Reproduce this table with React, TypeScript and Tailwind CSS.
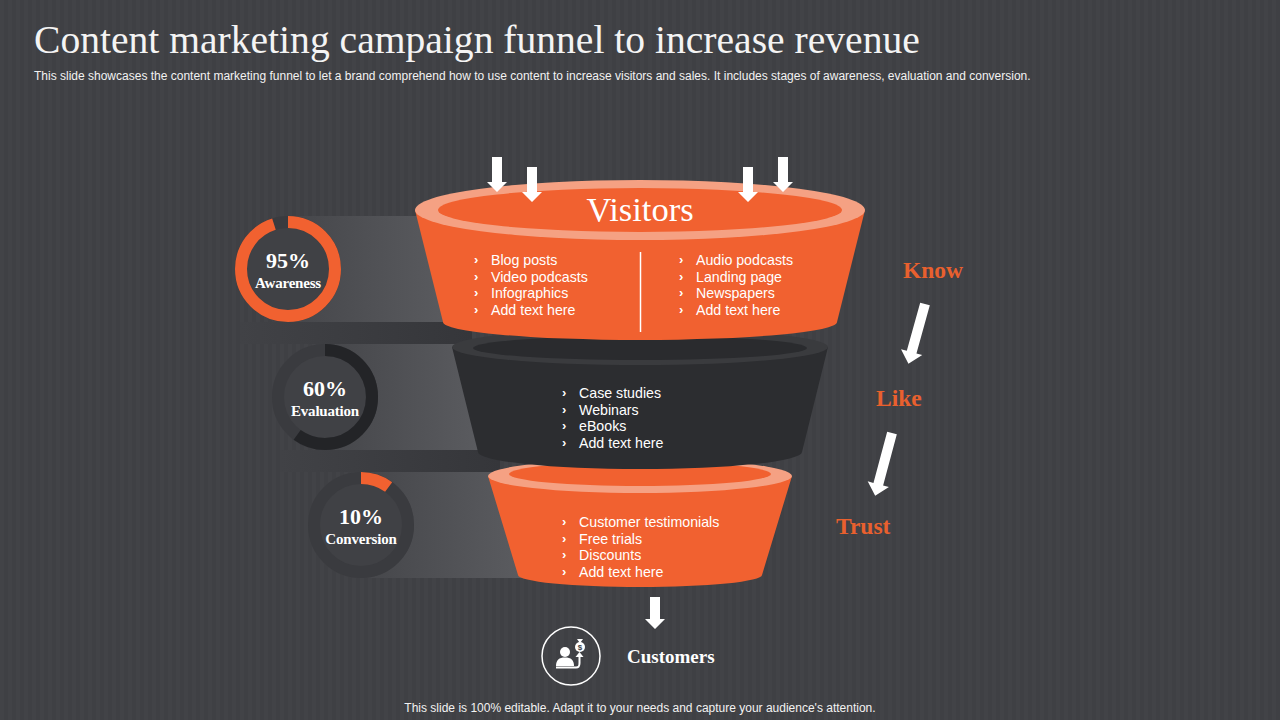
import React from "react";

const ORANGE = "#F16130";
const RIM = "#F5A183";
const C = 2 * Math.PI * 47;

const visitorsLeft = ["Blog posts", "Video podcasts", "Infographics", "Add text here"];
const visitorsRight = ["Audio podcasts", "Landing page", "Newspapers", "Add text here"];
const evaluation = ["Case studies", "Webinars", "eBooks", "Add text here"];
const conversion = ["Customer testimonials", "Free trials", "Discounts", "Add text here"];

const stages = [
  { cx: 288, cy: 269, pct: 0.95, label: "95%", name: "Awareness", color: ORANGE },
  { cx: 325, cy: 397, pct: 0.6, label: "60%", name: "Evaluation", color: "#232427" },
  { cx: 361, cy: 525, pct: 0.1, label: "10%", name: "Conversion", color: ORANGE },
];

function BulletList({ items }: { items: string[] }) {
  return (
    <div className="text-[14.2px] leading-[16.7px] text-white">
      {items.map((t, i) => (
        <div key={i} className="flex">
          <span className="w-[19px] pl-[2px] text-[13px] font-bold">›</span>
          <span>{t}</span>
        </div>
      ))}
    </div>
  );
}

function DownArrow({ x, top, tip }: { x: number; top: number; tip: number }) {
  const neck = tip - 10;
  return (
    <polygon
      points={`${x - 5},${top} ${x + 5},${top} ${x + 5},${neck} ${x + 10},${neck} ${x},${tip} ${x - 10},${neck} ${x - 5},${neck}`}
      fill="#ffffff"
    />
  );
}

function SlantArrow({ x, y, len, angle }: { x: number; y: number; len: number; angle: number }) {
  const neck = len - 12;
  return (
    <polygon
      transform={`rotate(${angle} ${x} ${y})`}
      points={`${x - 5},${y} ${x + 5},${y} ${x + 5},${y + neck} ${x + 11},${y + neck} ${x},${y + len} ${x - 11},${y + neck} ${x - 5},${y + neck}`}
      fill="#ffffff"
    />
  );
}

function Diagram() {
  return (
    <svg width="1280" height="720" viewBox="0 0 1280 720" className="absolute inset-0">
      <defs>
        <linearGradient id="band" x1="0" x2="1" y1="0" y2="0">
          <stop offset="0" stopColor="#45464a" />
          <stop offset="1" stopColor="#5b5c60" />
        </linearGradient>
        <linearGradient id="shade" x1="0" x2="1" y1="0" y2="0">
          <stop offset="0" stopColor="#414246" />
          <stop offset="1" stopColor="#35363a" />
        </linearGradient>
      </defs>

      {/* steps behind the rings */}
      <rect x="288" y="216" width="170" height="106" fill="url(#band)" />
      <rect x="240" y="322" width="232" height="22" fill="url(#shade)" />
      <rect x="325" y="344" width="160" height="106" fill="url(#band)" />
      <rect x="280" y="450" width="220" height="22" fill="url(#shade)" />
      <rect x="361" y="472" width="165" height="106" fill="url(#band)" />

      {/* rings */}
      {stages.map((s) => (
        <g key={s.name}>
          <circle cx={s.cx} cy={s.cy} r="53" fill="#404145" />
          <circle cx={s.cx} cy={s.cy} r="47" fill="none" stroke="#3a3b3f" strokeWidth="12" />
          <circle
            cx={s.cx}
            cy={s.cy}
            r="47"
            fill="none"
            stroke={s.color}
            strokeWidth="12"
            strokeDasharray={`${s.pct * C} ${C}`}
            transform={`rotate(-90 ${s.cx} ${s.cy})`}
          />
        </g>
      ))}

      {/* bottom funnel */}
      <path d="M488,476 L518,575 A122,12 0 0 0 762,575 L792,476 Z" fill={ORANGE} />
      <ellipse cx="640" cy="476" rx="152" ry="17" fill={RIM} />
      <ellipse cx="640" cy="474" rx="131" ry="12" fill={ORANGE} />

      {/* middle funnel */}
      <path d="M452,347 L478,452 A162,17 0 0 0 802,452 L828,347 Z" fill="#2c2d30" />
      <ellipse cx="640" cy="347" rx="188" ry="18" fill="#3a3b3e" />
      <ellipse cx="640" cy="348" rx="167" ry="12" fill="#2a2b2e" />

      {/* top funnel */}
      <path d="M415,210 L443,322 A197,18 0 0 0 837,322 L865,210 Z" fill={ORANGE} />
      <ellipse cx="640" cy="210" rx="225" ry="30" fill={RIM} />
      <ellipse cx="640" cy="210" rx="202" ry="22" fill={ORANGE} />
      <line x1="640.5" y1="252" x2="640.5" y2="332" stroke="#ffffff" strokeWidth="1.5" />

      <DownArrow x={497} top={157} tip={192} />
      <DownArrow x={532} top={167} tip={202} />
      <DownArrow x={748} top={167} tip={202} />
      <DownArrow x={783} top={157} tip={192} />
      <DownArrow x={655} top={597} tip={629} />

      <SlantArrow x={925} y={304} len={62} angle={15.5} />
      <SlantArrow x={892} y={433} len={65} angle={15} />

      {/* customers icon */}
      <circle cx="571" cy="656" r="29" fill="none" stroke="#ffffff" strokeWidth="1.5" />
      <circle cx="565" cy="652" r="5" fill="#ffffff" />
      <path d="M556,666 C556,660 559,657.5 565,657.5 C571,657.5 574,660 574,666 Z" fill="#ffffff" />
      <path d="M556,667.5 L576,667.5 C579,667.5 579.5,666 579.5,663 L579.5,656" fill="none" stroke="#ffffff" strokeWidth="2" />
      <polygon points="575.5,657 579.5,652 583.5,657" fill="#ffffff" />
      <circle cx="580" cy="647" r="5" fill="#ffffff" />
      <path d="M577,639 L583,639 L580.5,642.5 L579.5,642.5 Z" fill="#ffffff" />
      <text x="580" y="650" textAnchor="middle" fontSize="8" fontWeight="bold" fill="#404145" fontFamily="Liberation Sans, Arial, sans-serif">$</text>
    </svg>
  );
}

export default function App() {
  return (
    <div
      className="relative flex h-[720px] w-[1280px] flex-col overflow-hidden bg-[#414246] bg-[repeating-linear-gradient(90deg,#424347_0px,#424347_4px,#3f4044_4px,#3f4044_8px)] text-white"
      style={{ fontFamily: '"Liberation Sans", Arial, sans-serif' }}
    >
      <Diagram />

      <header className="relative z-10 px-[34px] pt-[21px]">
        <h1 className="font-['Liberation_Serif',serif] text-[39.6px] leading-[38px] text-[#f4f4f4]">
          Content marketing campaign funnel to increase revenue
        </h1>
        <p className="mt-[11px] text-[12px] leading-[13px] text-[#f2f2f2]">
          This slide showcases the content marketing funnel to let a brand comprehend how to use content to increase
          visitors and sales. It includes stages of awareness, evaluation and conversion.
        </p>
      </header>

      {/* funnel labels */}
      <div className="absolute left-[540px] top-[189px] w-[200px] text-center font-['Liberation_Serif',serif] text-[34.5px] leading-[40px]">
        Visitors
      </div>
      <div className="absolute left-[472px] top-[252px]">
        <BulletList items={visitorsLeft} />
      </div>
      <div className="absolute left-[677px] top-[252px]">
        <BulletList items={visitorsRight} />
      </div>
      <div className="absolute left-[560px] top-[385px]">
        <BulletList items={evaluation} />
      </div>
      <div className="absolute left-[560px] top-[514px]">
        <BulletList items={conversion} />
      </div>

      {/* ring labels */}
      {stages.map((s) => (
        <div
          key={s.name}
          className="absolute w-[110px] text-center font-['Liberation_Serif',serif] font-bold"
          style={{ left: s.cx - 55, top: s.cy - 19 }}
        >
          <div className="text-[22px] leading-[22px]">{s.label}</div>
          <div className="mt-[3px] text-[15px] leading-[16px] tracking-[-0.2px]">{s.name}</div>
        </div>
      ))}

      {/* know / like / trust */}
      <div className="absolute left-[903px] top-[257px] font-['Liberation_Serif',serif] text-[23.5px] font-bold leading-[26px] text-[#E9602E]">
        Know
      </div>
      <div className="absolute left-[876px] top-[385px] font-['Liberation_Serif',serif] text-[23.5px] font-bold leading-[26px] text-[#E9602E]">
        Like
      </div>
      <div className="absolute left-[836px] top-[513px] font-['Liberation_Serif',serif] text-[23.5px] font-bold leading-[26px] text-[#E9602E]">
        Trust
      </div>

      <div className="absolute left-[627px] top-[646px] font-['Liberation_Serif',serif] text-[19px] font-bold leading-[22px]">
        Customers
      </div>

      <div className="flex-1" />
      <footer className="relative z-10 pb-[4px] text-center text-[12px] leading-[16px] text-[#f2f2f2]">
        This slide is 100% editable. Adapt it to your needs and capture your audience's attention.
      </footer>
    </div>
  );
}
